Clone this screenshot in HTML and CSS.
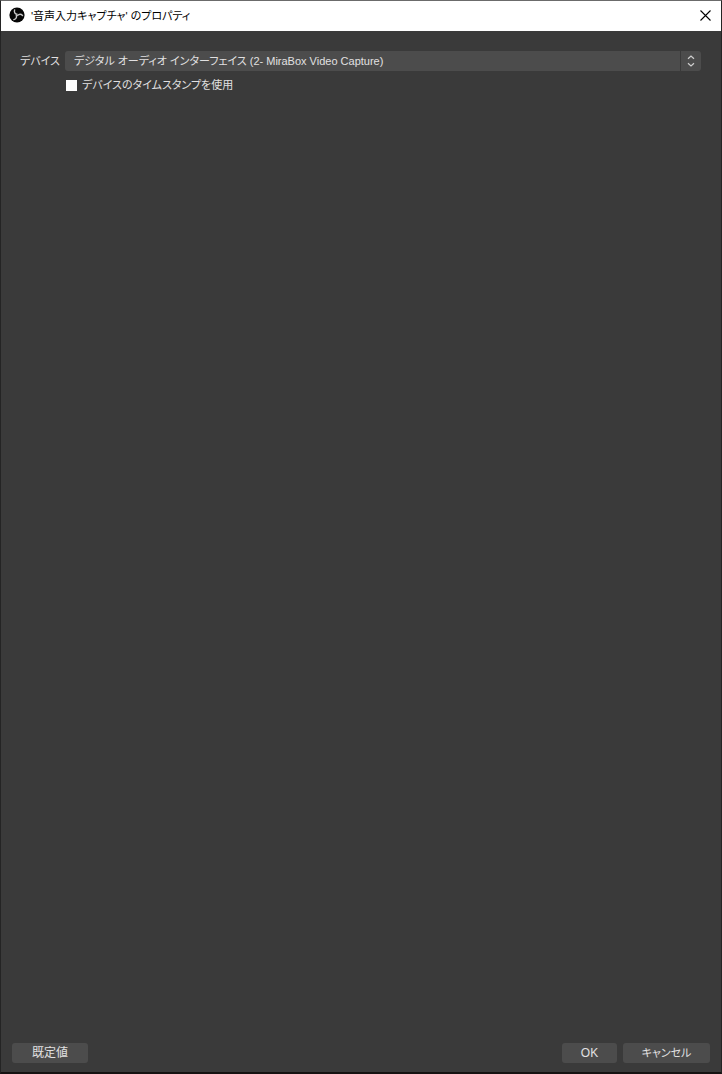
FILE: index.html
```html
<!DOCTYPE html>
<html lang="ja">
<head>
<meta charset="utf-8">
<title>'音声入力キャプチャ' のプロパティ</title>
<link rel="stylesheet" href="styles.css">
</head>
<body>
<main class="dialog">
  <header class="titlebar">
    <svg class="logo" viewBox="0 0 16 16" aria-hidden="true">
      <circle cx="8" cy="8" r="7.6" fill="#050505"/>
      <g fill="none" stroke="#c8c8c8" stroke-width="1.4" stroke-linecap="round">
        <path d="M5.6 3C4.9 5.2 6 6.8 8 7.2"/>
        <path d="M5.6 3C4.9 5.2 6 6.8 8 7.2" transform="rotate(120 8 8)"/>
        <path d="M5.6 3C4.9 5.2 6 6.8 8 7.2" transform="rotate(240 8 8)"/>
      </g>
    </svg>
    <h1 class="title">'音声入力キャプチャ' のプロパティ</h1>
    <button class="close" type="button" aria-label="閉じる">
      <svg class="close-icon" viewBox="0 0 11 11"><path d="M.5.5l10 10M10.5.5l-10 10" fill="none" stroke="#000" stroke-width="1.1"/></svg>
    </button>
  </header>
  <form class="content">
    <div class="fields">
      <label class="label" for="device">デバイス</label>
      <div class="combo">
        <select class="select" id="device">
          <option>デジタル オーディオ インターフェイス (2- MiraBox Video Capture)</option>
        </select>
        <span class="arrows">
          <svg class="arrows-icon" viewBox="0 0 8 12"><path d="M1 3.8L4 1l3 2.8M1 8.2L4 11l3-2.8" fill="none" stroke="#d0d0d0" stroke-width="1.2"/></svg>
        </span>
      </div>
      <label class="check"><input class="box" type="checkbox"><span>デバイスのタイムスタンプを使用</span></label>
    </div>
    <footer class="actions">
      <button class="button defaults" type="button">既定値</button>
      <button class="button ok" type="button">OK</button>
      <button class="button cancel" type="button">キャンセル</button>
    </footer>
  </form>
</main>
</body>
</html>
```
FILE: styles.css
```css
* {
  box-sizing: border-box;
}

body {
  margin: 0;
  background: #3a3a3a;
  color: #e1e0e1;
  font: 11px/20px "Liberation Sans", "Noto Sans CJK JP", sans-serif;
  font-feature-settings: "palt";
}

button,
select {
  font: inherit;
  font-feature-settings: inherit;
  color: inherit;
  border: 0;
}

.dialog {
  display: flex;
  flex-direction: column;
  min-height: 100vh;
  border: 1px solid #242424;
  border-top-color: #6b6b6b;
  border-bottom: 2px solid #151212;
}

.titlebar {
  display: flex;
  align-items: center;
  height: 30px;
  padding-left: 8px;
  background: #fff;
  color: #000;
}

.logo {
  width: 16px;
  height: 16px;
  margin: 0 6px 2px 0;
}

.title {
  flex: 1;
  margin: 0;
  font-size: 11px;
  font-weight: 400;
}

.close {
  display: flex;
  align-items: center;
  justify-content: center;
  width: 31px;
  height: 30px;
  padding: 0 0 2px;
  background: none;
}

.close-icon {
  width: 11px;
  height: 11px;
}

.content {
  display: flex;
  flex: 1;
  flex-direction: column;
  justify-content: space-between;
  padding: 20px 11px 9px;
}

.fields {
  display: grid;
  grid-template-columns: 39px 1fr;
  gap: 4px 6px;
  padding: 0 9px 0 8px;
}

.label {
  white-space: nowrap;
}

.combo {
  display: flex;
  gap: 1px;
  height: 20px;
}

.select {
  flex: 1;
  min-width: 0;
  padding: 0 9px;
  appearance: none;
  border-radius: 3px 0 0 3px;
  background: #4c4c4c;
}

.arrows {
  display: flex;
  align-items: center;
  justify-content: center;
  width: 20px;
  border-radius: 0 3px 3px 0;
  background: #4c4c4c;
  pointer-events: none;
}

.arrows-icon {
  width: 8px;
  height: 12px;
}

.check {
  display: flex;
  grid-column: 2;
  align-items: center;
  justify-self: start;
  gap: 5px;
}

.box {
  width: 11px;
  height: 11px;
  margin: 0 0 0 1px;
  appearance: none;
  background: #fff;
}

.box:checked {
  border: 3px solid #fff;
  background: #3a3a3a;
}

.actions {
  display: flex;
  gap: 6px;
}

.button {
  height: 20px;
  padding: 0;
  border-radius: 3px;
  background: #4c4c4c;
  font-size: 12px;
}

.defaults {
  width: 76px;
  margin-right: auto;
}

.ok {
  width: 55px;
}

.cancel {
  width: 87px;
  font-size: 11px;
}
```
